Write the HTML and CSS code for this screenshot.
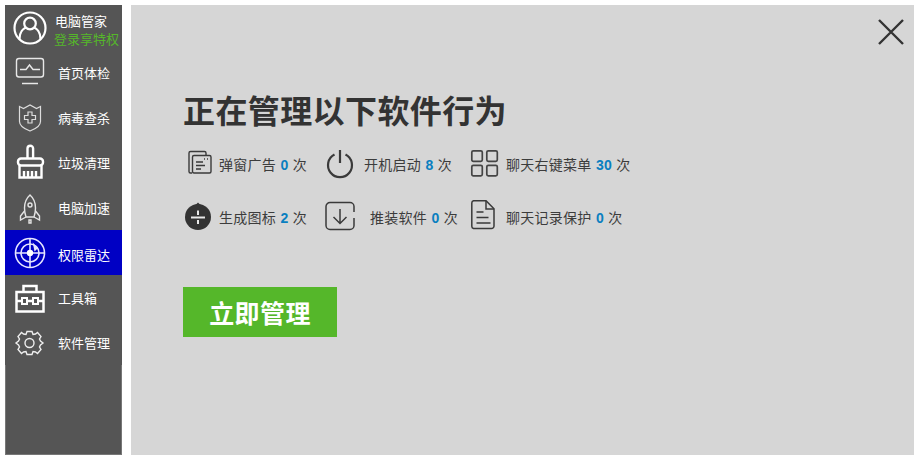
FILE: index.html
```html
<!DOCTYPE html>
<html lang="zh">
<head>
<meta charset="utf-8">
<title>电脑管家</title>
<link rel="stylesheet" href="styles.css">
</head>
<body>
<div class="app">
  <aside class="side">
    <div class="user">
      <svg class="nav-icon" width="50" height="45" viewBox="0 0 50 45" fill="none" stroke="#fff" stroke-width="2.200"><circle cx="25" cy="23" r="15.500"/><circle cx="25" cy="18.500" r="5.800"/><path d="M14.500 34c0-7 4-10.500 6.500-11.500M35.500 34c0-7-4-10.500-6.500-11.500"/></svg>
      <div class="user-text"><div class="user-name">电脑管家</div><div class="user-login">登录享特权</div></div>
    </div>
    <nav class="nav">
      <a class="nav-item">
        <svg class="nav-icon" width="50" height="45" viewBox="0 0 50 45" fill="none" stroke="#e8e8e8" stroke-width="1.400"><rect x="11.500" y="8.500" width="27" height="18.500" rx="2.500"/><path d="M15 19.500h6l3.500-4.500 3.500 4.500h7M17 33.500h16"/></svg>
        <span>首页体检</span>
      </a>
      <a class="nav-item">
        <svg class="nav-icon" width="50" height="45" viewBox="0 0 50 45" fill="none" stroke="#ddd" stroke-width="1.200"><path d="M14.500 11.500l4 2 6.500-3.500 6.500 3.500 4-2v15c0 4-5 7.500-10.500 9.500-5.500-2-10.500-5.500-10.500-9.500z"/><path d="M23 17h4v3.500h3.500v4H27V28h-4v-3.500h-3.500v-4H23z"/></svg>
        <span>病毒查杀</span>
      </a>
      <a class="nav-item">
        <svg class="nav-icon" width="50" height="45" viewBox="0 0 50 45" fill="none" stroke="#fff" stroke-width="2.400"><path d="M22.500 18v-9.500a2.800 2.800 0 0 1 5.600 0V18"/><rect x="13" y="18.500" width="25" height="7" rx="3"/><path d="M14.500 25.500v12h22v-12M19 31v6M23 31v6M27 31v6M31 31v6"/></svg>
        <span>垃圾清理</span>
      </a>
      <a class="nav-item">
        <svg class="nav-icon" width="50" height="45" viewBox="0 0 50 45" fill="none" stroke="#e4e4e4" stroke-width="1.400"><path d="M25 10c-4 3.500-5.500 8-5.500 13 0 3 .5 6 1.500 9h8c1-3 1.500-6 1.500-9 0-5-1.500-9.500-5.500-13z"/><circle cx="25" cy="20" r="2"/><path d="M19.500 26l-4 5v4l5.500-3M30.500 26l4 5v4l-5.500-3M24 35h2v3h-2z"/></svg>
        <span>电脑加速</span>
      </a>
      <a class="nav-item is-active">
        <svg class="nav-icon" width="50" height="45" viewBox="0 0 50 45" fill="none" stroke="#e6e6ff" stroke-width="1.600"><circle cx="25" cy="23" r="14.500"/><circle cx="25" cy="23" r="9"/><path d="M25 8v30M10 23h30"/><circle cx="25" cy="23" r="3.200" fill="#fff" stroke="none"/><path d="M29 15l3 3-2 2z" fill="#e6e6ff"/></svg>
        <span>权限雷达</span>
      </a>
      <a class="nav-item">
        <svg class="nav-icon" width="50" height="45" viewBox="0 0 50 45" fill="none" stroke="#fff" stroke-width="2.500"><rect x="11.500" y="17" width="27" height="19.500"/><path d="M18.500 17v-6h13v6M11 26h6M22 26h6M33 26h6"/><rect x="17" y="23" width="5" height="6" stroke-width="2"/><rect x="28" y="23" width="5" height="6" stroke-width="2"/></svg>
        <span>工具箱</span>
      </a>
      <a class="nav-item">
        <svg class="nav-icon" width="50" height="45" viewBox="0 0 50 45" fill="none" stroke="#eee" stroke-width="1.400"><circle cx="24.500" cy="23" r="4.500"/><path d="M22 11.500h5l1 3 2.500-.5 2-1.500 3.500 4-1.500 2.500 1 2 2.500 2-2.500 2-1 2 1.500 2.500-3.500 4-2-1.500-2.500-.5-1 3h-5l-1-3-2.500.5-2 1.500-3.500-4 1.500-2.500-1-2-2.500-2 2.500-2 1-2-1.500-2.500 3.500-4 2 1.500 2.500.5z"/></svg>
        <span>软件管理</span>
      </a>
    </nav>
    <div class="side-fill"></div>
  </aside>
  <main class="main">
    <svg class="close" width="26" height="26" viewBox="0 0 26 26" fill="none" stroke="#333" stroke-width="2.400"><path d="M1 1l24 24M25 1L1 25"/></svg>
    <h1 class="title">正在管理以下软件行为</h1>
    <div class="stats">
      <div class="stat">
        <svg width="36" height="32" viewBox="0 0 36 32" fill="none" stroke="#3a3a3a" stroke-width="1.400"><path d="M9 26H7.500A1.500 1.500 0 0 1 6 24.500V6a1.500 1.500 0 0 1 1.500-1.500h14A1.500 1.500 0 0 1 23 6v2"/><rect x="9.500" y="8.500" width="18.500" height="17.500" rx="1.500"/><path d="M13 15h7M13 18.500h9M13 22h5M21 12h1M24 12h1"/></svg>
        <span class="label">弹窗广告 <b>0</b> 次</span>
      </div>
      <div class="stat">
        <svg width="41" height="32" viewBox="0 0 41 32" fill="none" stroke="#3a3a3a" stroke-width="2.200"><path d="M11.500 7.500a12 12 0 1 0 11 0M17 3v13"/></svg>
        <span class="label">开机启动 <b>8</b> 次</span>
      </div>
      <div class="stat">
        <svg width="37" height="32" viewBox="0 0 37 32" fill="none" stroke="#444" stroke-width="1.700"><rect x="2.800" y="3.800" width="10.500" height="10.500" rx="1.500"/><rect x="17.800" y="3.800" width="10.500" height="10.500" rx="1.500"/><rect x="2.800" y="18.300" width="10.500" height="10.500" rx="1.500"/><rect x="17.800" y="18.300" width="10.500" height="10.500" rx="1.500"/></svg>
        <span class="label">聊天右键菜单 <b>30</b> 次</span>
      </div>
      <div class="stat">
        <svg width="36" height="32" viewBox="0 0 36 32"><circle cx="15" cy="17" r="13" fill="#333"/><path d="M15 2.500l-2.500 2.500h5z" fill="#333"/><path d="M8 17.500h14M15 10.500v4.500M15 20v4" fill="none" stroke="#e8e8e8" stroke-width="2"/></svg>
        <span class="label">生成图标 <b>2</b> 次</span>
      </div>
      <div class="stat">
        <svg width="47" height="32" viewBox="0 0 47 32" fill="none" stroke="#3a3a3a" stroke-width="1.500"><path d="M31 18v7.500a4 4 0 0 1-4 4H7a4 4 0 0 1-4-4V6.500a4 4 0 0 1 4-4h20a4 4 0 0 1 4 4V12"/><path d="M17 9v14.500M10.500 17l6.500 6.500 6.500-6.500"/></svg>
        <span class="label">推装软件 <b>0</b> 次</span>
      </div>
      <div class="stat">
        <svg width="37" height="32" viewBox="0 0 37 32" fill="none" stroke="#3a3a3a" stroke-width="1.500"><path d="M4.500 .7h12.500l8 8V26a2.500 2.500 0 0 1-2.500 2.500h-18A2.500 2.500 0 0 1 2.800 26V3a2.500 2.500 0 0 1 1.700-2.300z"/><path d="M17 1v8h8M7.500 12h7M7.500 17.500h12M7.500 23h14"/></svg>
        <span class="label">聊天记录保护 <b>0</b> 次</span>
      </div>
    </div>
    <button class="cta" type="button">立即管理</button>
  </main>
</div>
</body>
</html>
```
FILE: styles.css
```css
* { box-sizing: border-box; }
html, body { height: 100%; }
body {
  margin: 0;
  background: #fff;
  font-family: "Noto Sans CJK SC", "Liberation Sans", sans-serif;
}
.app {
  display: flex;
  gap: 9px;
  width: 922px;
  height: 461px;
  padding: 5px 8px 6px 5px;
}
.side {
  display: flex;
  flex-direction: column;
  flex: 0 0 117px;
  background: #555;
  color: #fff;
}
.user {
  display: flex;
  align-items: center;
  height: 45px;
}
.nav-icon { display: block; flex: 0 0 50px; }
.user-text { font-size: 13px; line-height: 18px; margin-top: 5px; }
.user-name { color: #fff; white-space: nowrap; }
.user-login { color: #55b72a; white-space: nowrap; margin-left: -1px; }
.nav { display: flex; flex-direction: column; }
.nav-item {
  display: flex;
  align-items: center;
  height: 45px;
  font-size: 13px;
  color: #fff;
  gap: 3px;
}
.is-active { background: #0000c4; }
.is-active span { padding-top: 3px; }
.side-fill {
  flex: 1;
  border: 1px solid #777;
  border-top: 0;
}
.main {
  position: relative;
  flex: 1;
  background: #d6d6d6;
  padding: 84px 0 0 52px;
  color: #333;
}
.close { position: absolute; top: 14px; right: 10px; }
.title {
  margin: 0;
  height: 40px;
  font-size: 32px;
  line-height: 40px;
  font-weight: 700;
  letter-spacing: .4px;
  color: #333;
  white-space: nowrap;
}
.stats {
  display: grid;
  grid-template-columns: 140px 146px max-content;
  grid-auto-rows: 52px;
  row-gap: 1px;
  margin-top: 8px;
}
.stat { display: flex; align-items: center; }
.stat svg { display: block; flex: none; }
.label {
  font-size: 14px;
  line-height: 20px;
  padding-top: 2px;
  letter-spacing: .25px;
  word-spacing: 1px;
  white-space: nowrap;
  color: #3c3c3c;
}
.label b {
  font-family: "Liberation Sans", sans-serif;
  font-weight: 700;
  color: #0a7fc0;
}
.cta {
  display: block;
  width: 154px;
  height: 50px;
  margin-top: 45px;
  padding: 0;
  border: 0;
  background: #55b72a;
  color: #fff;
  font-family: inherit;
  font-size: 25px;
  font-weight: 700;
  letter-spacing: .4px;
  line-height: 50px;
}
```
